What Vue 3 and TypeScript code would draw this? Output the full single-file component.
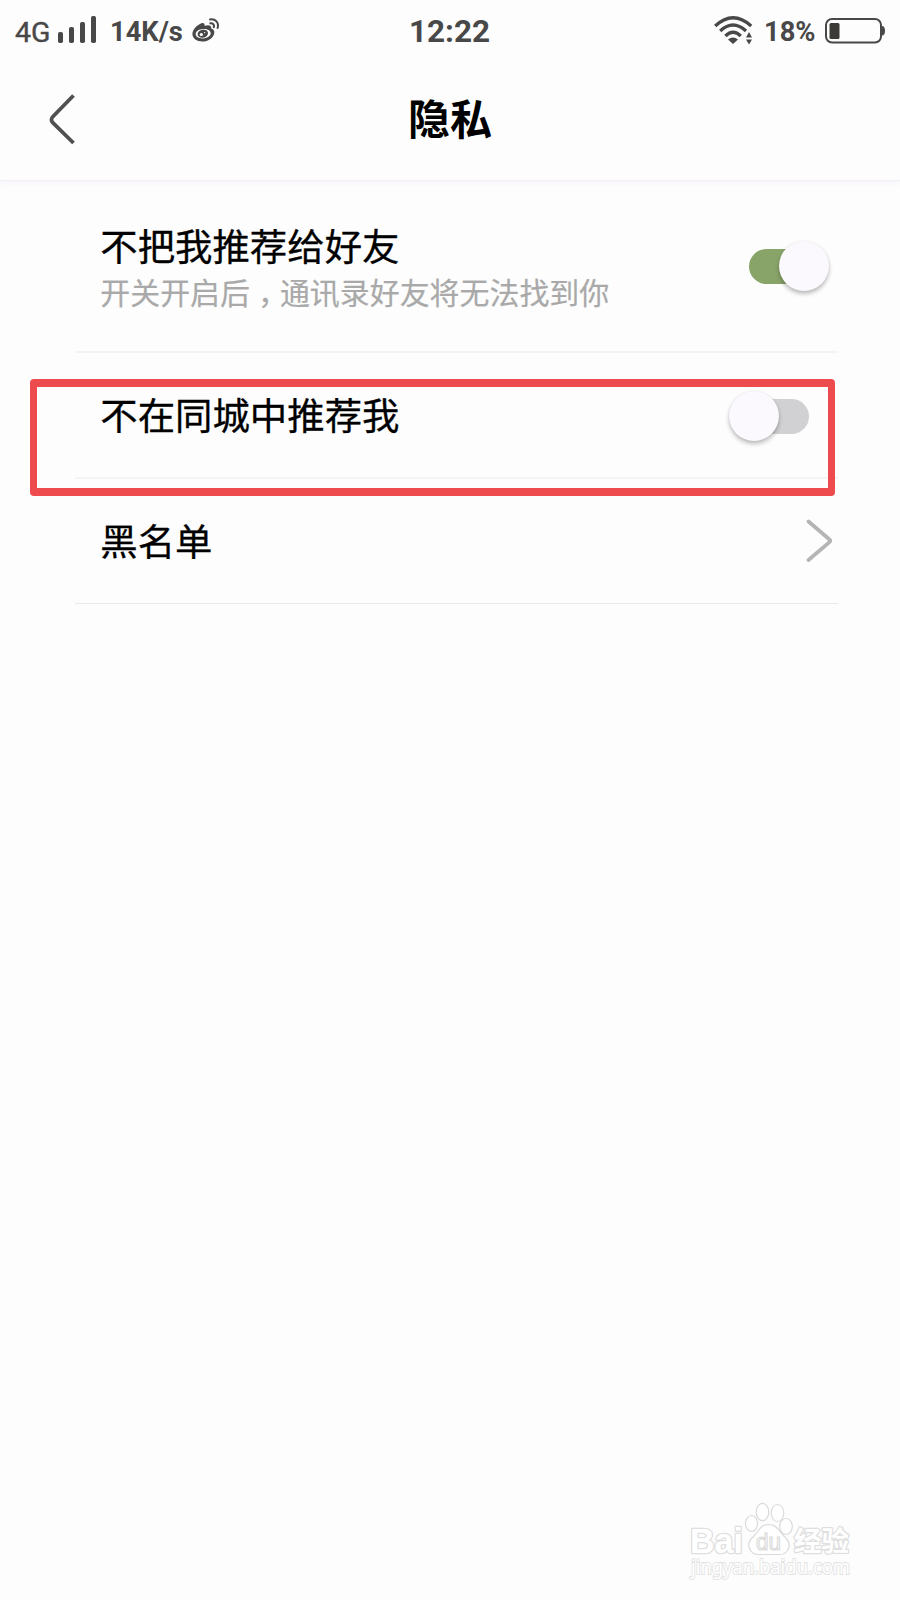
<script setup lang="ts">
import { ref } from 'vue'

interface Setting {
  id: string
  title: string
  kind: 'switch' | 'link'
  on?: boolean
}

const rows = ref<Setting[]>([
  { id: 'friends', title: '不把我推荐给好友', kind: 'switch', on: true },
  { id: 'city', title: '不在同城中推荐我', kind: 'switch', on: false },
  { id: 'blacklist', title: '黑名单', kind: 'link' },
])

function toggle(row: Setting) {
  if (row.kind === 'switch') row.on = !row.on
}
</script>

<template>
  <div class="screen">
    <div class="status">
      <div class="side left">
        <span class="net">4G</span>
        <svg class="bars" width="40" height="30" viewBox="0 0 40 30" fill="#484849">
          <rect x="0" y="17" width="5" height="11" rx="1.8" />
          <rect x="11" y="12" width="5" height="16" rx="1.8" />
          <rect x="22" y="7" width="5" height="21" rx="1.8" />
          <rect x="33" y="1" width="5" height="27" rx="1.8" />
        </svg>
        <span class="speed">14K/s</span>
        <svg class="weibo" width="28" height="26" viewBox="0 0 28 26" fill="none">
          <path
            fill="#484849"
            fill-rule="evenodd"
            d="M9 5.400c2.500-1 4 .2 3.500 2.400c3.700-1.300 7.400-.8 6.700 2.600c2.600.9 3.600 2.700 3 5c-1.100 4.800-6.300 8.100-11.700 8.100C4.800 23.500.4 20.500.4 16C.4 11.500 5 7 9 5.400ZM11.200 11c-4.700.3-7.700 2.700-7.500 5.300c.2 2.700 3.500 4.400 7.600 4.100c4.400-.3 7.600-2.700 7.400-5.400c-.2-2.600-3.500-4.300-7.500-4Z"
          />
          <path fill="#484849" fill-rule="evenodd" d="M10.800 11.800c3-.5 5.200 1 5.200 3.300c0 2.500-2.300 4.500-5.100 4.700c-3 .2-5.300-1.300-5.300-3.600c0-2.200 2.200-4 5.200-4.400ZM9.300 15a1.700 1.500 0 1 0 0 3a1.700 1.500 0 1 0 0-3ZM12.600 13.900a.7.700 0 1 0 0 1.400a.7.700 0 1 0 0-1.400Z" />
          <path stroke="#484849" stroke-width="2" stroke-linecap="round" d="M18 1.500c5.500-1 9.200 3.400 7.600 8.500M18.300 5.300c2.500-.4 4.300 1.600 3.500 4" />
        </svg>
      </div>
      <span class="clock">12:22</span>
      <div class="side right">
        <svg class="wifi" width="40" height="30" viewBox="0 0 40 30" fill="none">
          <g stroke="#484849" stroke-width="3.300">
            <path d="M1.200 10Q19 -6.500 37.200 10" />
            <path d="M6.200 15Q19 3 32 15" />
            <path d="M11.400 20Q19 12.500 26.800 20" />
          </g>
          <path fill="#484849" d="M14 23.500Q19 19.500 24 23.500L19 28Z" />
          <path fill="#484849" d="M32 21.500L35 16L38 21.500ZM32 23.500L35 28.500L38 23.500Z" />
        </svg>
        <span class="percent">18%</span>
        <svg class="battery" width="60" height="26" viewBox="0 0 60 26" fill="none">
          <rect x="1" y="1" width="55" height="23.500" rx="6" stroke="#484849" stroke-width="2" />
          <rect x="4.500" y="5" width="10" height="16" rx="1.500" fill="#3b3a36" />
          <path fill="#484849" d="M57 8q3 0 3 4.700q0 4.800-3 4.800Z" />
        </svg>
      </div>
    </div>

    <header class="nav">
      <button class="back" aria-label="返回">
        <svg width="28" height="52" viewBox="0 0 28 52" fill="none">
          <path d="M24.500 1.500L4 22.500Q.8 25.700 4 28.900L24.500 49" stroke="#505051" stroke-width="3.800" />
        </svg>
      </button>
      <h1>隐私</h1>
    </header>

    <main>
      <section v-for="row in rows" :key="row.id" class="row" :class="row.id" @click="toggle(row)">
        <div class="copy">
          <div class="title">{{ row.title }}</div>
          <div v-if="row.id === 'friends'" class="note">开关开启后<span class="comma">，</span>通讯录好友将无法找到你</div>
        </div>
        <div v-if="row.kind === 'switch'" class="switch" :class="{ on: row.on }"><i class="thumb"></i></div>
        <svg v-else class="arrow" width="27" height="44" viewBox="0 0 27 44" fill="none">
          <path d="M2.500 2.500L23.500 20.500Q25 21.800 23.500 23.100L2.500 41" stroke="#b5b5b5" stroke-width="3.800" stroke-linecap="round" />
        </svg>
        <div v-if="row.id === 'city'" class="marker"></div>
      </section>
    </main>

    <div class="watermark">
      <svg width="180" height="96" viewBox="0 0 180 96" fill="#fff" stroke="#dadada" stroke-width="1.200">
        <text x="10" y="62.500" class="word" textLength="53" lengthAdjust="spacingAndGlyphs">Bai</text>
        <ellipse cx="71.500" cy="33.500" rx="6" ry="8" />
        <ellipse cx="82.500" cy="22" rx="6.300" ry="8.700" />
        <ellipse cx="97.500" cy="23" rx="6.300" ry="8.500" />
        <ellipse cx="106" cy="36.500" rx="6.300" ry="8" />
        <path d="M88.500 34.500c-9 0-10 8-16 13c-7 6-3 17 6 17h21c9 0 13-10 6-17c-6-5-8-13-17-13Z" />
        <text x="76" y="60" class="du" textLength="25" lengthAdjust="spacingAndGlyphs">du</text>
        <text x="114" y="61" class="cn" textLength="55" lengthAdjust="spacingAndGlyphs">经验</text>
        <text x="11" y="84" class="site" textLength="159" lengthAdjust="spacingAndGlyphs">jingyan.baidu.com</text>
      </svg>
    </div>
  </div>
</template>

<style>
body {
  background: #fdfdfd;
}
</style>

<style scoped>
.screen {
  position: relative;
  width: 900px;
  height: 1600px;
  overflow: hidden;
  background: #fdfdfd;
  color: #000;
  font-family: "Noto Sans CJK SC", sans-serif;
}
.status {
  display: grid;
  grid-template-columns: 1fr auto 1fr;
  height: 62px;
  padding: 0 15px 0 14px;
  align-items: center;
  color: #484849;
  font-family: Roboto, sans-serif;
  white-space: nowrap;
}
.side {
  display: flex;
  align-items: center;
}
.right {
  justify-content: flex-end;
}
.net {
  width: 43px;
  margin-left: 1px;
  padding-top: 3px;
  font-size: 28.500px;
  -webkit-text-stroke: 0.400px #484849;
}
.bars {
  margin-top: -2px;
}
.speed {
  width: 74px;
  margin: 1px 0 0 12px;
  font-size: 27.300px;
  font-weight: 700;
}
.weibo {
  margin: 0 0 0 8px;
}
.clock {
  padding-top: 1px;
  font-size: 31.500px;
  font-weight: 700;
}
.wifi {
  margin-right: 1px;
}
.percent {
  width: 50px;
  margin: 1px 0 0 9px;
  font-size: 27.300px;
  font-weight: 700;
}
.battery {
  margin-left: 11px;
}
.nav {
  display: grid;
  grid-template-columns: 120px 1fr 120px;
  align-items: center;
  height: 118px;
  box-shadow: 0 1px 0 #f1f0f3, 0 3px 5px #f7f2fa;
}
.back {
  margin: 0 0 2px 49px;
  padding: 0;
  border: 0;
  background: none;
  width: 28px;
  height: 52px;
}
.back svg {
  display: block;
}
h1 {
  margin: 0 0 8px;
  text-align: center;
  font-size: 42px;
  line-height: 60px;
  font-weight: 700;
}
.row {
  position: relative;
  display: flex;
  justify-content: space-between;
  margin: 0 62px 0 75px;
  padding-left: 25.300px;
  box-sizing: border-box;
  border-bottom: 2px solid #f4f4f4;
}
.friends {
  height: 173px;
  padding-top: 40px;
}
.city {
  height: 126px;
  padding-top: 36px;
}
.blacklist {
  height: 125px;
  padding-top: 36px;
  border-bottom: 1px solid #e9e9e9;
}
.title {
  font-size: 37.400px;
  line-height: 50px;
  -webkit-text-stroke: 0.300px #000;
}
.note {
  color: #a9a9a9;
  font-size: 29.950px;
  line-height: 42px;
  -webkit-text-stroke: 0.200px #a9a9a9;
}
.comma {
  display: inline-block;
  box-sizing: border-box;
  width: 29.950px;
  padding-left: 8px;
  font-feature-settings: "halt";
}
.switch {
  width: 60px;
  height: 35px;
  margin: 29px 29px 0 0;
  border-radius: 18px;
  background: #d1d0d2;
}
.city .switch {
  margin-top: 10px;
}
.switch.on {
  background: #89a469;
}
.thumb {
  display: block;
  width: 50px;
  height: 50px;
  margin: -8px 0 0 -20px;
  border-radius: 50%;
  background: #fbf9fd;
  box-shadow: 0 3px 4px rgba(0, 0, 0, 0.25), 0 0 2px rgba(0, 0, 0, 0.08);
}
.on .thumb {
  margin-left: 30px;
}
.arrow {
  margin: 4px 5px 0 0;
}
.marker {
  position: absolute;
  left: -45px;
  top: 26px;
  width: 805px;
  height: 117px;
  box-sizing: border-box;
  border: solid #ee4b4e;
  border-width: 8px 7px;
  border-radius: 4px;
  z-index: 1;
}
.watermark {
  position: absolute;
  left: 680px;
  top: 1490px;
}
.watermark svg {
  display: block;
}
.word,
.cn {
  stroke: #dfdfdf;
  stroke-width: 2.600px;
  stroke-linejoin: round;
  paint-order: stroke;
}
.word {
  font: 700 34.500px "Liberation Sans", sans-serif;
}
.cn {
  font: 700 27.500px "Noto Sans CJK SC", sans-serif;
}
.du {
  font: 24px "Liberation Sans", sans-serif;
}
.site {
  font: 19.500px "Noto Sans", sans-serif;
  stroke: #e2e2e2;
  stroke-width: 1.800px;
  paint-order: stroke;
}
</style>
